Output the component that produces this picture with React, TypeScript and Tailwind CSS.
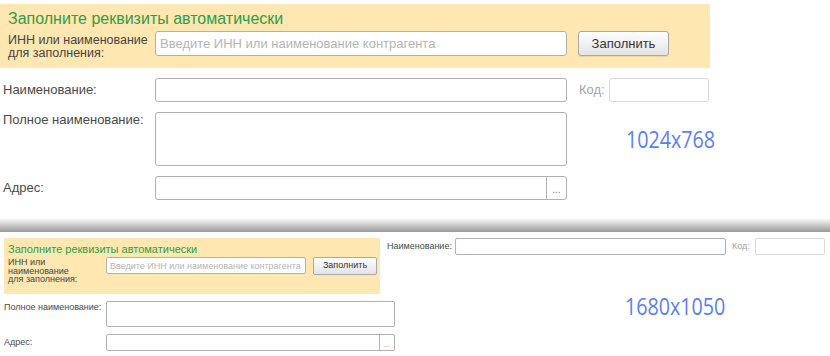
const sans = "font-['Liberation_Sans',Arial,sans-serif]"
const blue = "font-['Open_Sans',sans-serif] text-[#5b7ef5] origin-left scale-x-[0.82]"

function Ellipsis({ big }: { big?: boolean }) {
  return (
    <div
      className={
        big
          ? 'w-[20px] h-full border-l border-[#b3b3b3] flex items-end justify-center pb-[4px] text-[10px] leading-[10px] text-[#777]'
          : 'w-[15px] h-full border-l border-[#b3b3b3] flex items-end justify-center pb-[2px] text-[7px] leading-[7px] text-[#888]'
      }
    >
      ...
    </div>
  )
}

export default function App() {
  return (
    <div className={`w-[830px] h-[356px] bg-white overflow-hidden text-[#4a4a4a] ${sans}`}>
      {/* 1024x768 */}
      <div className="pt-[4px]">
        <div className="w-[710px] h-[64px] bg-[#fee7b1] pl-[8px] pt-[5px]">
          <div className="text-[16px] leading-[20px] text-[#2e9e45]">Заполните реквизиты автоматически</div>
          <div className="flex items-start mt-[2px]">
            <div className="w-[147px] pt-[3px] text-[12.5px] leading-[13px] text-[#444]">
              ИНН или наименование
              <br />
              для заполнения:
            </div>
            <input
              readOnly
              placeholder="Введите ИНН или наименование контрагента"
              className="w-[412px] h-[25px] px-[4px] bg-white border border-[#b0b0b0] rounded-[3px] text-[13px] placeholder:text-[#b5b5b5] outline-none"
            />
            <button className="ml-[11px] w-[91px] h-[25px] rounded-[3px] border border-[#a8a8a8] bg-gradient-to-b from-white to-[#e3e3e3] text-[13px] text-[#333] shadow-[0_1px_1px_rgba(0,0,0,0.08)]">
              Заполнить
            </button>
          </div>
        </div>

        <div className="flex items-center mt-[10px] h-[24px]">
          <div className="w-[155px] pl-[3px] text-[13px]">Наименование:</div>
          <div className="w-[412px] h-[24px] border border-[#b0b0b0] rounded-[3px]" />
          <div className="ml-[12px] w-[30px] text-[13px] text-[#a3a3a3]">Код:</div>
          <div className="w-[100px] h-[24px] border border-[#d9d9d9] rounded-[3px]" />
        </div>

        <div className="flex items-start mt-[10px]">
          <div className="w-[155px] pl-[3px] text-[13px] leading-[16px]">Полное наименование:</div>
          <textarea readOnly className="w-[412px] h-[54px] border border-[#b0b0b0] rounded-[3px] resize-none outline-none" />
          <div className={`ml-[59px] self-center text-[24px] leading-[24px] ${blue}`}>1024x768</div>
        </div>

        <div className="flex items-center mt-[10px] h-[24px]">
          <div className="w-[155px] pl-[3px] text-[13px]">Адрес:</div>
          <div className="w-[412px] h-[24px] border border-[#b0b0b0] rounded-[3px] flex justify-end">
            <Ellipsis big />
          </div>
        </div>
      </div>

      <div className="mt-[18px] h-[14px] bg-gradient-to-b from-white to-[#9a9a9a]" />

      {/* 1680x1050 */}
      <div className="mt-[6px] flex items-start">
        <div className="ml-[4px] w-[376px] h-[56px] bg-[#fee7b1] pl-[4px] pt-[4px]">
          <div className="text-[11px] leading-[14px] text-[#2e9e45]">Заполните реквизиты автоматически</div>
          <div className="flex items-start mt-[1px]">
            <div className="w-[98px] pt-[1px] text-[9px] leading-[8.5px] text-[#444]">
              ИНН или
              <br />
              наименование
              <br />
              для заполнения:
            </div>
            <input
              readOnly
              placeholder="Введите ИНН или наименование контрагента"
              className="w-[200px] h-[17px] px-[3px] bg-white border border-[#b0b0b0] rounded-[2px] text-[9px] placeholder:text-[#b5b5b5] outline-none"
            />
            <button className="ml-[7px] w-[64px] h-[18px] rounded-[2px] border border-[#a8a8a8] bg-gradient-to-b from-white to-[#e3e3e3] text-[9px] text-[#333]">
              Заполнить
            </button>
          </div>
        </div>
        <div className="ml-[7px] flex items-center h-[17px]">
          <div className="w-[68px] text-[9px]">Наименование:</div>
          <div className="w-[271px] h-[17px] border border-[#b0b0b0] rounded-[2px]" />
          <div className="ml-[6px] w-[23px] text-[9px] text-[#a3a3a3]">Код:</div>
          <div className="w-[70px] h-[17px] border border-[#d9d9d9] rounded-[2px]" />
        </div>
      </div>

      <div className="mt-[7px] flex items-start">
        <div className="w-[106px] pl-[4px] text-[9px] leading-[12px]">Полное наименование:</div>
        <textarea readOnly className="w-[289px] h-[26px] border border-[#b0b0b0] rounded-[2px] resize-none outline-none" />
        <div className={`ml-[230px] -mt-[7px] text-[24px] leading-[24px] ${blue}`}>1680x1050</div>
      </div>

      <div className="mt-[7px] flex items-center h-[17px]">
        <div className="w-[106px] pl-[4px] text-[9px]">Адрес:</div>
        <div className="w-[289px] h-[17px] border border-[#b0b0b0] rounded-[2px] flex justify-end">
          <Ellipsis />
        </div>
      </div>
    </div>
  )
}
